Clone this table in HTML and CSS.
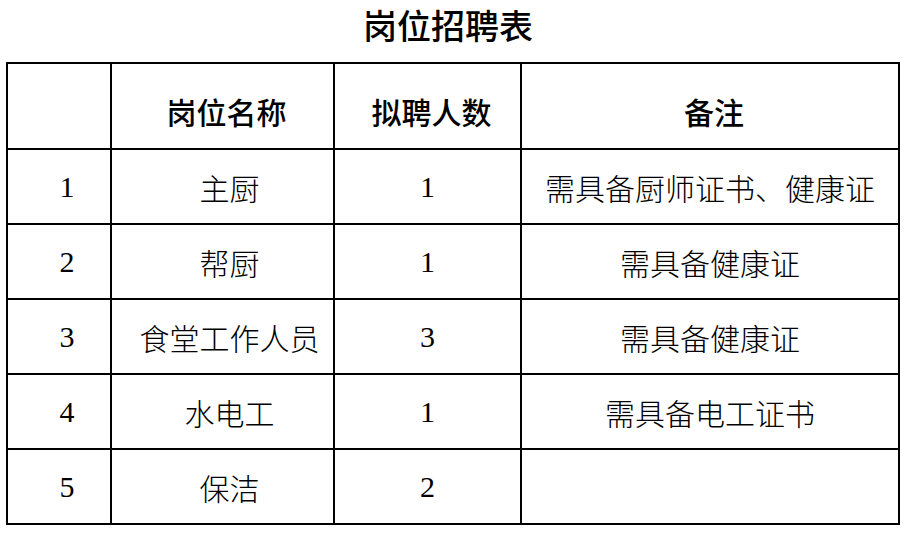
FILE: index.html
```html
<!DOCTYPE html>
<html lang="zh">
<head>
<meta charset="utf-8">
<link rel="stylesheet" href="styles.css">
</head>
<body>
<div class="page">
  <h1 class="title">岗位招聘表</h1>
  <table class="grid">
    <colgroup>
      <col class="c1"><col class="c2"><col class="c3"><col class="c4">
    </colgroup>
    <thead>
      <tr><th></th><th>岗位名称</th><th>拟聘人数</th><th>备注</th></tr>
    </thead>
    <tbody>
      <tr><td class="no">1</td><td class="name">主厨</td><td>1</td><td>需具备厨师证书、健康证</td></tr>
      <tr><td class="no">2</td><td class="name">帮厨</td><td>1</td><td>需具备健康证</td></tr>
      <tr><td class="no">3</td><td class="name">食堂工作人员</td><td>3</td><td>需具备健康证</td></tr>
      <tr><td class="no">4</td><td class="name">水电工</td><td>1</td><td>需具备电工证书</td></tr>
      <tr><td class="no">5</td><td class="name">保洁</td><td>2</td><td></td></tr>
    </tbody>
  </table>
</div>
</body>
</html>
```
FILE: styles.css
```css
html, body {
  margin: 0;
  padding: 0;
  background: #fff;
}
.page {
  padding: 0 0 0 6px;
  font-family: "Liberation Serif", "Noto Sans CJK SC", serif;
  color: #000;
}
.title {
  width: 884px;
  margin: 0;
  padding-top: 8px;
  height: 62px;
  box-sizing: border-box;
  text-align: center;
  font-size: 34px;
  line-height: 40px;
  font-weight: 500;
}
.grid {
  border-collapse: collapse;
  table-layout: fixed;
  width: 892px;
}
.c1 { width: 104px; }
.c2 { width: 223px; }
.c3 { width: 187px; }
.c4 { width: 378px; }
.grid th, .grid td {
  border: 2px solid #000;
  text-align: center;
  padding: 0;
  font-size: 30px;
  white-space: nowrap;
}
.grid th {
  height: 86px;
  padding: 10px 0 0 8px;
  box-sizing: border-box;
  font-weight: 500;
}
.grid td {
  height: 75px;
  box-sizing: border-box;
  font-weight: 300;
}
.grid td.no {
  padding-left: 16px;
}
.grid td.name {
  padding-left: 14px;
}
```
